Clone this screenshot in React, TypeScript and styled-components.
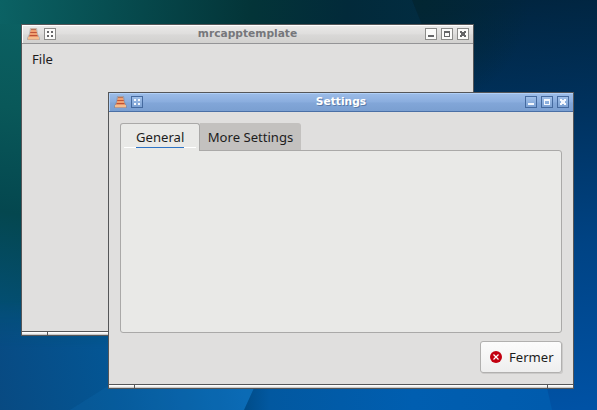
import React from "react";
import styled, { createGlobalStyle, css } from "styled-components";

const GlobalStyle = createGlobalStyle`
  * { box-sizing: border-box; }
  body { margin: 0; overflow: hidden; }
`;

const Desktop = styled.main`
  position: relative;
  width: 597px;
  height: 410px;
  overflow: hidden;
  background: #034870;
  font-family: "Noto Sans", "Open Sans", sans-serif;
  font-size: 13.1px;
  color: #1d1d1d;
`;

const WallpaperSvg = styled.svg`
  position: absolute;
  inset: 0;
`;

const AppWindow = styled.section<{ $x: number; $y: number; $w: number; $h: number }>`
  position: absolute;
  left: ${(p) => p.$x}px;
  top: ${(p) => p.$y}px;
  width: ${(p) => p.$w}px;
  height: ${(p) => p.$h}px;
  display: flex;
  flex-direction: column;
  border: 1px solid #555658;
  background: #e0dfde;
`;

const TitleBar = styled.header<{ $active: boolean }>`
  display: flex;
  align-items: flex-start;
  flex: none;
  height: 19px;
  padding: 3px 4px 0 5px;
  ${(p) =>
    p.$active
      ? css`
          background: linear-gradient(#9dbde8, #8aadde 50%, #82a6d8 55%, #7a9fd1);
          border-bottom: 1px solid #4a6fa5;
          box-shadow: inset 1px 1px #b1d0f7;
        `
      : css`
          background: linear-gradient(#ebeae9, #dfdedd 50%, #d9d8d7 55%, #d2d1cf);
          border-bottom: 1px solid #949496;
          box-shadow: inset 1px 1px #ffffff;
        `}
`;

const Title = styled.h1<{ $active: boolean }>`
  flex: 1;
  margin: -1px 0 0 14px;
  font: bold 10.67px/13px "DejaVu Sans", sans-serif;
  text-align: center;
  color: ${(p) => (p.$active ? "#ffffff" : "#76777b")};
  text-shadow: ${(p) => (p.$active ? "1px 1px #5b7ba8" : "none")};
`;

const ButtonGroup = styled.div`
  display: flex;
  gap: 4px;
  flex: none;
`;

const FrameButton = styled.button<{ $active: boolean }>`
  width: 12px;
  height: 12px;
  padding: 0;
  display: block;
  border: 1px solid ${(p) => (p.$active ? "#456a9f" : "#8c8c8a")};
  background: ${(p) => (p.$active ? "linear-gradient(#9fbfe9, #7ca1d3)" : "#fbfbfa")};
  color: ${(p) => (p.$active ? "#f4f8fd" : "#666668")};
  svg { display: block; }
`;

const TitleLeft = styled.div`
  display: flex;
  flex: none;
  gap: 4px;
`;

const StatusHandles = styled.footer`
  display: flex;
  flex: none;
  height: 4px;
  border-top: 1px solid #555658;
  background: #555658;
  gap: 1px;
`;

const Handle = styled.div<{ $width?: number }>`
  flex: ${(p) => (p.$width ? `0 0 ${p.$width}px` : "1")};
  background: linear-gradient(#ffffff 0 1px, #f0f0f0 1px 2px, #c9c9c9 2px);
`;

const MenuBar = styled.nav`
  flex: 1;
  padding: 6px 10px;
  line-height: 18px;
`;

const DialogBody = styled.div`
  flex: 1;
  display: flex;
  flex-direction: column;
  padding: 11px 11px 11px;
`;

const TabList = styled.div`
  display: flex;
  flex: none;
  height: 28px;
  margin-bottom: -1px;
  position: relative;
  z-index: 1;
`;

const Tab = styled.button<{ $selected?: boolean }>`
  font: inherit;
  color: inherit;
  line-height: 18px;
  border: 0;
  display: flex;
  justify-content: center;
  ${(p) =>
    p.$selected
      ? css`
          width: 80px;
          padding: 4px 0 0;
          border: 1px solid #aaa9a8;
          border-bottom: 0;
          border-radius: 3px 3px 0 0;
          background: linear-gradient(#ffffff, #ffffff) 3px 23px / 72px 1px no-repeat #e9e9e7;
        `
      : css`
          width: 101px;
          height: 27px;
          padding: 5px 0 0;
          border-radius: 0 3px 0 0;
          background: #c3c1bf;
        `}
`;

const TabLabel = styled.span<{ $selected?: boolean }>`
  display: block;
  height: 20px;
  white-space: nowrap;
  ${(p) => p.$selected && "width: 48px; border-bottom: 1px solid #2d73c5;"}
`;

const Panel = styled.div`
  height: 183px;
  border: 1px solid #aaa9a8;
  border-radius: 0 3px 3px 3px;
  background: #e9e9e7;
`;

const Actions = styled.div`
  display: flex;
  justify-content: flex-end;
  margin-top: 8px;
`;

const CloseButton = styled.button`
  width: 82px;
  height: 32px;
  padding: 0 0 0 9px;
  display: flex;
  align-items: center;
  gap: 7px;
  font: inherit;
  color: inherit;
  border: 1px solid #b1b0af;
  border-radius: 3px;
  background: linear-gradient(#fcfcfc, #eeeeee);
  box-shadow: 1px 1px #cbcac9;
`;

const ConeIcon = () => (
  <svg width="13" height="13" viewBox="0 0 13 13">
    <path d="M3 0h7L11 6l2 4v2H0v-2L2 6Z" fill="#8a7a70" opacity=".4" />
    <path d="M4 .8h5l1 5.2 2 5.5H1L3 6Z" fill="#f0a070" />
    <path d="M4 1h5v1H4Z" fill="#b9755a" />
    <path d="M3.2 4h6.6v1H3.2Z" fill="#bf553a" />
    <path d="M2.5 7h8v1h-8Z" fill="#be5034" />
    <path d="M2 8h9v1H2Z" fill="#e8956a" />
    <path d="M1 9h11v2H1Z" fill="#f4bd8e" />
  </svg>
);

const glyphs = {
  menu: "M2 2h2v2H2ZM6 2h2v2H6ZM2 6h2v2H2ZM6 6h2v2H6Z",
  minimize: "M2 6h6v2H2Z",
  maximize: "M2 2h6v6H2ZM3 4v3h4V4Z",
  close: "M2 2h2v1h2V2h2v2H7v2h1v2H6V7H4v1H2V6h1V4H2Z",
};

function WindowButton({ kind, active }: { kind: keyof typeof glyphs; active: boolean }) {
  return (
    <FrameButton $active={active} aria-label={kind}>
      <svg width="10" height="10" viewBox="0 0 10 10" shapeRendering="crispEdges">
        <path d={glyphs[kind]} fill="currentColor" fillRule="evenodd" />
      </svg>
    </FrameButton>
  );
}

function WindowTitle({ text, active = false }: { text: string; active?: boolean }) {
  return (
    <TitleBar $active={active}>
      <TitleLeft>
        <ConeIcon />
        <WindowButton kind="menu" active={active} />
      </TitleLeft>
      <Title $active={active}>{text}</Title>
      <ButtonGroup>
        <WindowButton kind="minimize" active={active} />
        <WindowButton kind="maximize" active={active} />
        <WindowButton kind="close" active={active} />
      </ButtonGroup>
    </TitleBar>
  );
}

function Wallpaper() {
  return (
    <WallpaperSvg width="597" height="410" viewBox="0 0 597 410">
      <defs>
        <linearGradient id="top" x1="0" y1="0" x2="597" y2="50" gradientUnits="userSpaceOnUse">
          <stop offset="0" stopColor="#0b6264" />
          <stop offset=".18" stopColor="#074e51" />
          <stop offset=".42" stopColor="#033438" />
          <stop offset=".58" stopColor="#022a3a" />
          <stop offset="1" stopColor="#013050" />
        </linearGradient>
        <linearGradient id="left" x1="0" y1="0" x2="-70" y2="410" gradientUnits="userSpaceOnUse">
          <stop offset="0" stopColor="#0b6264" />
          <stop offset=".25" stopColor="#095859" />
          <stop offset=".5" stopColor="#04474f" />
          <stop offset=".75" stopColor="#034f76" />
          <stop offset="1" stopColor="#084c84" />
        </linearGradient>
        <linearGradient id="right" x1="530" y1="0" x2="570" y2="410" gradientUnits="userSpaceOnUse">
          <stop offset="0" stopColor="#012540" />
          <stop offset=".28" stopColor="#00325f" />
          <stop offset=".6" stopColor="#004384" />
          <stop offset="1" stopColor="#0052a5" />
        </linearGradient>
        <radialGradient id="shade" cx="420" cy="0" r="110" gradientUnits="userSpaceOnUse">
          <stop offset="0" stopColor="#022632" />
          <stop offset="1" stopColor="#022632" stopOpacity="0" />
        </radialGradient>
        <linearGradient id="lower" x1="0" y1="410" x2="240" y2="360" gradientUnits="userSpaceOnUse">
          <stop offset="0" stopColor="#084a82" />
          <stop offset=".45" stopColor="#045593" />
          <stop offset="1" stopColor="#0a68b2" />
        </linearGradient>
        <linearGradient id="fade" x1="0" y1="300" x2="0" y2="350" gradientUnits="userSpaceOnUse">
          <stop offset="0" stopColor="#fff" stopOpacity="0" />
          <stop offset="1" stopColor="#fff" />
        </linearGradient>
        <mask id="lowerMask"><path d="M0 290h270v120H0Z" fill="url(#fade)" /></mask>
        <linearGradient id="floor" x1="245" y1="400" x2="550" y2="400" gradientUnits="userSpaceOnUse">
          <stop offset="0" stopColor="#004c89" />
          <stop offset=".08" stopColor="#0258a0" />
          <stop offset=".55" stopColor="#005eb0" />
          <stop offset="1" stopColor="#005bad" />
        </linearGradient>
      </defs>
      <path d="M0 0h597v120H0Z" fill="url(#top)" />
      <path d="M0 24h220v386H0Z" fill="url(#left)" />
      <path d="M412 0h185v410H440V70Z" fill="url(#right)" />
      <path d="M412 0h185v120H460Z" fill="url(#shade)" />
      <path d="M0 290h260v120H0Z" fill="url(#lower)" mask="url(#lowerMask)" />
      <path d="M70 410 108 386v2h146l-10 22Z" fill="#1680cc" opacity=".14" />
      <path d="M254 388h293l5 22H244Z" fill="url(#floor)" />
    </WallpaperSvg>
  );
}

export default function App() {
  return (
    <>
      <GlobalStyle />
      <Desktop>
        <Wallpaper />
        <AppWindow $x={21} $y={24} $w={453} $h={312}>
          <WindowTitle text="mrcapptemplate" />
          <MenuBar>File</MenuBar>
          <StatusHandles>
            <Handle $width={25} />
            <Handle />
            <Handle $width={25} />
          </StatusHandles>
        </AppWindow>
        <AppWindow $x={108} $y={92} $w={466} $h={297}>
          <WindowTitle text="Settings" active />
          <DialogBody>
            <TabList>
              <Tab $selected><TabLabel $selected>General</TabLabel></Tab>
              <Tab><TabLabel>More Settings</TabLabel></Tab>
            </TabList>
            <Panel />
            <Actions>
              <CloseButton>
                <svg width="12" height="12" viewBox="0 0 12 12">
                  <circle cx="6" cy="6" r="6" fill="#c20010" />
                  <path d="m3.5 3.5 5 5m0-5-5 5" stroke="#fff" strokeWidth="1.2" />
                </svg>
                Fermer
              </CloseButton>
            </Actions>
          </DialogBody>
          <StatusHandles>
            <Handle $width={25} />
            <Handle />
            <Handle $width={25} />
          </StatusHandles>
        </AppWindow>
      </Desktop>
    </>
  );
}
